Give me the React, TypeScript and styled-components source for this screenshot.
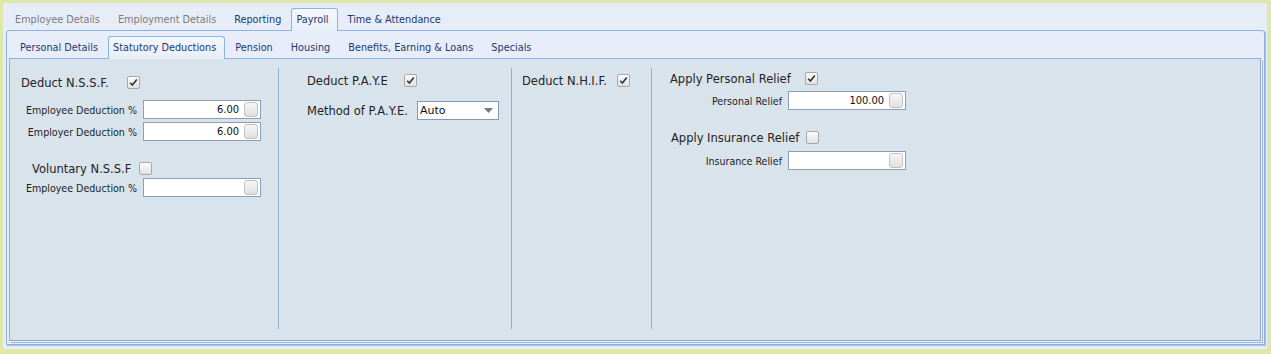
import styled, { createGlobalStyle } from "styled-components";

const GlobalStyle = createGlobalStyle`
  html, body {
    margin: 0;
    padding: 0;
    height: 354px;
    overflow: hidden;
  }
  body {
    font-family: "DejaVu Sans Condensed", "DejaVu Sans", sans-serif;
    font-size: 11px;
  }
  * {
    box-sizing: border-box;
  }
`;

const Root = styled.div`
  height: 354px;
  background: #e0e8a9;
  padding: 3px 4px 5px 3px;
`;

const Frame = styled.div`
  height: 346px;
  background: #e6edf8;
  border-radius: 3px 3px 0 0;
  padding-top: 5px;
  display: flex;
  flex-direction: column;
`;

const TabStrip = styled.div<{ $pl: number }>`
  display: flex;
  align-items: flex-end;
  gap: 6px;
  height: 22px;
  padding-left: ${({ $pl }) => $pl}px;
  flex-shrink: 0;
`;

const Tab = styled.div<{ $active?: boolean; $disabled?: boolean }>`
  height: ${({ $active }) => ($active ? 23 : 22)}px;
  padding: ${({ $active }) => ($active ? "3px 8px 0 4px" : "4px 6px 0")};
  margin: ${({ $active }) => ($active ? "0 -2px -1px" : "0")};
  line-height: 15px;
  font-size: 10.8px;
  white-space: nowrap;
  color: ${({ $disabled }) => ($disabled ? "#7c7c7c" : "#1d3a70")};
  position: relative;
  z-index: 1;
  border: ${({ $active }) => ($active ? "1px solid #8db2e3" : "none")};
  border-bottom: none;
  border-radius: 3px 3px 0 0;
  background: ${({ $active }) =>
    $active ? "linear-gradient(#f4f8fd, #e8eef9)" : "transparent"};
`;

const PageBox = styled.div`
  flex: 1;
  margin: 0 2px 4px 3px;
  border: 1px solid #8db2e3;
  border-radius: 3px 3px 0 0;
  box-shadow: 1px 1px 0 #a6bfe2;
  padding: 5px 3px 3px 2px;
  display: flex;
  flex-direction: column;
  background: #e7eef9;
`;

const Panel = styled.div`
  flex: 1;
  background: #d9e3ec;
  border: 1px solid #8db2e3;
  border-right-color: #8ea9cc;
  border-bottom-color: #8ea9cc;
  box-shadow: 1px 1px 0 #eaf1fb, 2px 2px 0 #9cb8de;
  padding: 9px 0 11px;
  display: flex;
`;

const Column = styled.div<{ $w?: number; $pl: number; $last?: boolean }>`
  ${({ $w }) => ($w ? `width: ${$w}px; flex-shrink: 0;` : "flex: 1;")}
  padding-left: ${({ $pl }) => $pl}px;
  border-right: ${({ $last }) => ($last ? "none" : "1px solid #90b0d0")};
  display: flex;
  flex-direction: column;
`;

const CheckRow = styled.div<{ $mt: number; $indent?: number }>`
  display: flex;
  align-items: center;
  height: 13px;
  margin-top: ${({ $mt }) => $mt}px;
  margin-left: ${({ $indent }) => $indent ?? 0}px;
`;

const CheckLabel = styled.span<{ $w: number }>`
  width: ${({ $w }) => $w}px;
  flex-shrink: 0;
  font-family: "DejaVu Sans", sans-serif;
  font-size: 11.5px;
  color: #262222;
  white-space: nowrap;
  padding-top: 1px;
`;

const Box = styled.span`
  width: 13px;
  height: 13px;
  border: 1px solid #a8a8a8;
  border-radius: 2px;
  background: linear-gradient(#fbfbfb, #e2e2e2);
  display: flex;
  align-items: center;
  justify-content: center;
`;

const FieldRow = styled.div<{ $mt: number }>`
  display: flex;
  align-items: center;
  height: 19px;
  margin-top: ${({ $mt }) => $mt}px;
`;

const FieldLabel = styled.span<{ $w: number; $big?: boolean }>`
  width: ${({ $w }) => $w}px;
  flex-shrink: 0;
  padding-right: 6px;
  text-align: ${({ $big }) => ($big ? "left" : "right")};
  white-space: nowrap;
  color: #1e1e1e;
  font-family: ${({ $big }) =>
    $big ? '"DejaVu Sans", sans-serif' : '"DejaVu Sans Condensed", sans-serif'};
  font-size: ${({ $big }) => ($big ? 11.5 : 10.6)}px;
`;

const NumberBox = styled.div`
  width: 118px;
  height: 19px;
  background: #ffffff;
  border: 1px solid #8b9fb8;
  display: flex;
  align-items: center;
  justify-content: flex-end;
  padding-right: 2px;
  gap: 5px;
  color: #111;
`;

const SpinButton = styled.span`
  width: 14px;
  height: 15px;
  border: 1px solid #c2c2c2;
  border-radius: 3px;
  background: linear-gradient(#f6f6f6, #e0e0e0);
`;

const Select = styled.div`
  width: 82px;
  height: 19px;
  background: #ffffff;
  border: 1px solid #7f9bb8;
  display: flex;
  align-items: center;
  justify-content: space-between;
  padding: 0 5px 0 2px;
  font-family: "DejaVu Sans", sans-serif;
  color: #111;
`;

function Check({ checked }: { checked?: boolean }) {
  return (
    <Box>
      {checked && (
        <svg width="9" height="9" viewBox="0 0 9 9">
          <path d="M1.2 4.8 L3.4 7 L7.8 1.4" fill="none" stroke="#333" strokeWidth="1.6" />
        </svg>
      )}
    </Box>
  );
}

function NumField({ value }: { value?: string }) {
  return (
    <NumberBox>
      <span>{value}</span>
      <SpinButton />
    </NumberBox>
  );
}

export default function App() {
  return (
    <>
      <GlobalStyle />
      <Root>
        <Frame>
          <TabStrip $pl={6}>
            <Tab $disabled>Employee Details</Tab>
            <Tab $disabled>Employment Details</Tab>
            <Tab>Reporting</Tab>
            <Tab $active>Payroll</Tab>
            <Tab>Time &amp; Attendance</Tab>
          </TabStrip>
          <PageBox>
            <TabStrip $pl={5}>
              <Tab>Personal Details</Tab>
              <Tab $active>Statutory Deductions</Tab>
              <Tab>Pension</Tab>
              <Tab>Housing</Tab>
              <Tab>Benefits, Earning &amp; Loans</Tab>
              <Tab>Specials</Tab>
            </TabStrip>
            <Panel>
              <Column $w={269} $pl={11}>
                <CheckRow $mt={8}>
                  <CheckLabel $w={106}>Deduct N.S.S.F.</CheckLabel>
                  <Check checked />
                </CheckRow>
                <FieldRow $mt={11}>
                  <FieldLabel $w={122}>Employee Deduction %</FieldLabel>
                  <NumField value="6.00" />
                </FieldRow>
                <FieldRow $mt={3}>
                  <FieldLabel $w={122}>Employer Deduction %</FieldLabel>
                  <NumField value="6.00" />
                </FieldRow>
                <CheckRow $mt={21} $indent={11}>
                  <CheckLabel $w={107}>Voluntary N.S.S.F</CheckLabel>
                  <Check />
                </CheckRow>
                <FieldRow $mt={3}>
                  <FieldLabel $w={122}>Employee Deduction %</FieldLabel>
                  <NumField />
                </FieldRow>
              </Column>
              <Column $w={233} $pl={28}>
                <CheckRow $mt={6}>
                  <CheckLabel $w={97}>Deduct P.A.Y.E</CheckLabel>
                  <Check checked />
                </CheckRow>
                <FieldRow $mt={14}>
                  <FieldLabel $w={110} $big>
                    Method of P.A.Y.E.
                  </FieldLabel>
                  <Select>
                    <span>Auto</span>
                    <svg width="9" height="5" viewBox="0 0 9 5">
                      <path d="M0 0 H9 L4.5 5 Z" fill="#6f7b88" />
                    </svg>
                  </Select>
                </FieldRow>
              </Column>
              <Column $w={140} $pl={10}>
                <CheckRow $mt={6}>
                  <CheckLabel $w={95}>Deduct N.H.I.F.</CheckLabel>
                  <Check checked />
                </CheckRow>
              </Column>
              <Column $pl={18} $last>
                <CheckRow $mt={4}>
                  <CheckLabel $w={135}>Apply Personal Relief</CheckLabel>
                  <Check checked />
                </CheckRow>
                <FieldRow $mt={6}>
                  <FieldLabel $w={118}>Personal Relief</FieldLabel>
                  <NumField value="100.00" />
                </FieldRow>
                <CheckRow $mt={21} $indent={1}>
                  <CheckLabel $w={135}>Apply Insurance Relief</CheckLabel>
                  <Check />
                </CheckRow>
                <FieldRow $mt={7}>
                  <FieldLabel $w={118}>Insurance Relief</FieldLabel>
                  <NumField />
                </FieldRow>
              </Column>
            </Panel>
          </PageBox>
        </Frame>
      </Root>
    </>
  );
}
